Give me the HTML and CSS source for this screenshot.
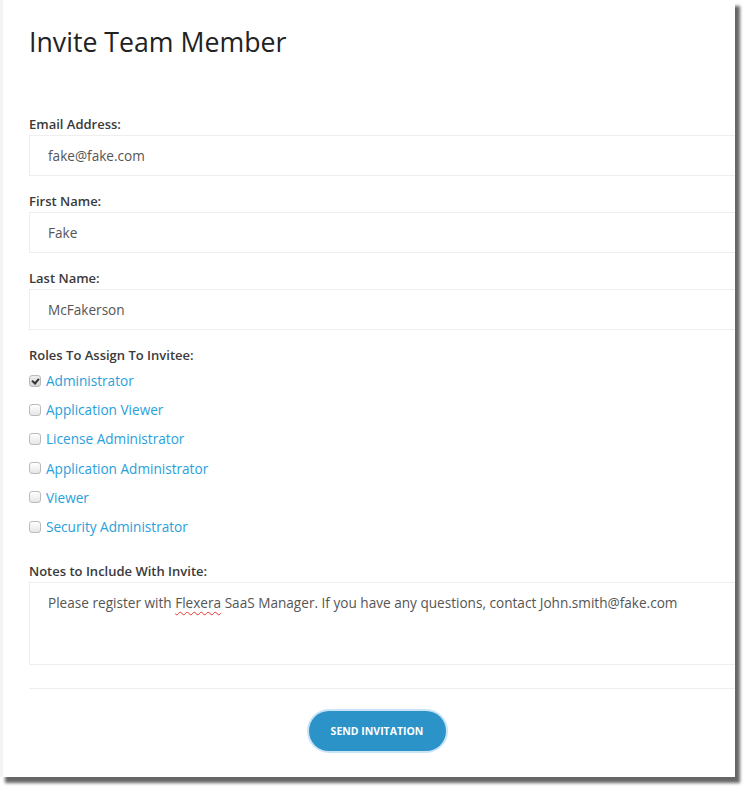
FILE: index.html
```html
<!DOCTYPE html>
<html lang="en">
<head>
    <meta charset="UTF-8">
    <meta name="viewport" content="width=device-width, initial-scale=1.0">
    <title>Invite Team Member</title>
    <link rel="stylesheet" href="styles.css">
</head>
<body>
    <div class="panel">
        <h1>Invite Team Member</h1>

        <form class="invite-form">
            <div class="field">
                <label>Email Address:</label>
                <div class="input">fake@fake.com</div>
            </div>
            <div class="field">
                <label>First Name:</label>
                <div class="input">Fake</div>
            </div>
            <div class="field">
                <label>Last Name:</label>
                <div class="input">McFakerson</div>
            </div>

            <!-- roles -->
            <div class="roles">
                <label>Roles To Assign To Invitee:</label>
                <div class="role"><span class="box checked"></span><a href="#">Administrator</a></div>
                <div class="role"><span class="box"></span><a href="#">Application Viewer</a></div>
                <div class="role"><span class="box"></span><a href="#">License Administrator</a></div>
                <div class="role"><span class="box"></span><a href="#">Application Administrator</a></div>
                <div class="role"><span class="box"></span><a href="#">Viewer</a></div>
                <div class="role"><span class="box"></span><a href="#">Security Administrator</a></div>
            </div>

            <div class="field notes">
                <label>Notes to Include With Invite:</label>
                <div class="input textarea">Please register with <span class="typo">Flexera</span> SaaS Manager. If you have any questions, contact John.smith@fake.com</div>
            </div>

            <div class="actions">
                <button type="button">Send Invitation</button>
            </div>
        </form>
    </div>
</body>
</html>
```

FILE: styles.css
```css
body {
    margin: 0;
    padding-bottom: 15px;
    background-color: #fff;
    font-family: "Open Sans", "Liberation Sans", sans-serif;
    color: #333;
}
.panel {
    width: 735px;
    height: 777px;
    border-left: 3px solid #f3f3f3;
    background-color: #fff;
    box-shadow: 5px 6px 3px rgba(0, 0, 0, 0.6);
    overflow: hidden;
    padding-left: 26px;
    box-sizing: border-box;
}
h1 {
    margin: 0;
    padding-top: 25px;
    font-size: 26.7px;
    line-height: 34px;
    font-weight: 400;
    color: #222;
}
.invite-form {
    margin-top: 56px;
}
label {
    display: block;
    font-size: 13px;
    line-height: 18px;
    font-weight: 600;
    color: #3a3a3a;
    margin-bottom: 2px;
}
.field {
    margin-bottom: 16px;
}
.input {
    height: 41px;
    box-sizing: border-box;
    border: 1px solid #eee;
    border-right: none;
    padding: 0 18px;
    font-size: 13.6px;
    line-height: 39px;
    color: #555;
}
.textarea {
    height: 83px;
    line-height: 18px;
    padding-top: 11px;
}
.typo {
    text-decoration: underline wavy #e33;
    text-decoration-thickness: 1px;
    text-underline-offset: 3px;
}
.roles {
    margin-bottom: 21px;
}
.role {
    display: flex;
    align-items: center;
    height: 29.2px;
}
.role a {
    color: #2aa0dc;
    text-decoration: none;
    font-size: 13.6px;
}
.box {
    width: 10px;
    height: 10px;
    border: 1px solid #bbb;
    border-radius: 3px;
    background: linear-gradient(#fff, #e6e6e6);
    margin-right: 5px;
    position: relative;
}
.box.checked {
    background: linear-gradient(#eee, #d6d6d6);
}
.box.checked::after {
    content: "";
    position: absolute;
    left: 3px;
    top: 1px;
    width: 3px;
    height: 5px;
    border: solid #333;
    border-width: 0 2px 2px 0;
    transform: rotate(40deg);
}
.notes {
    margin-bottom: 0;
}
.actions {
    margin-top: 23px;
    border-top: 1px solid #eee;
    padding-top: 22px;
    padding-right: 10px;
    display: flex;
    justify-content: center;
}
button {
    width: 137px;
    height: 40px;
    border: none;
    border-radius: 20px;
    background-color: #2b93c8;
    color: #fff;
    font-family: "Open Sans", "Liberation Sans", sans-serif;
    font-size: 10.5px;
    font-weight: 700;
    text-transform: uppercase;
    box-shadow: 0 0 0 2px #c9e3f7;
    cursor: pointer;
}
```
